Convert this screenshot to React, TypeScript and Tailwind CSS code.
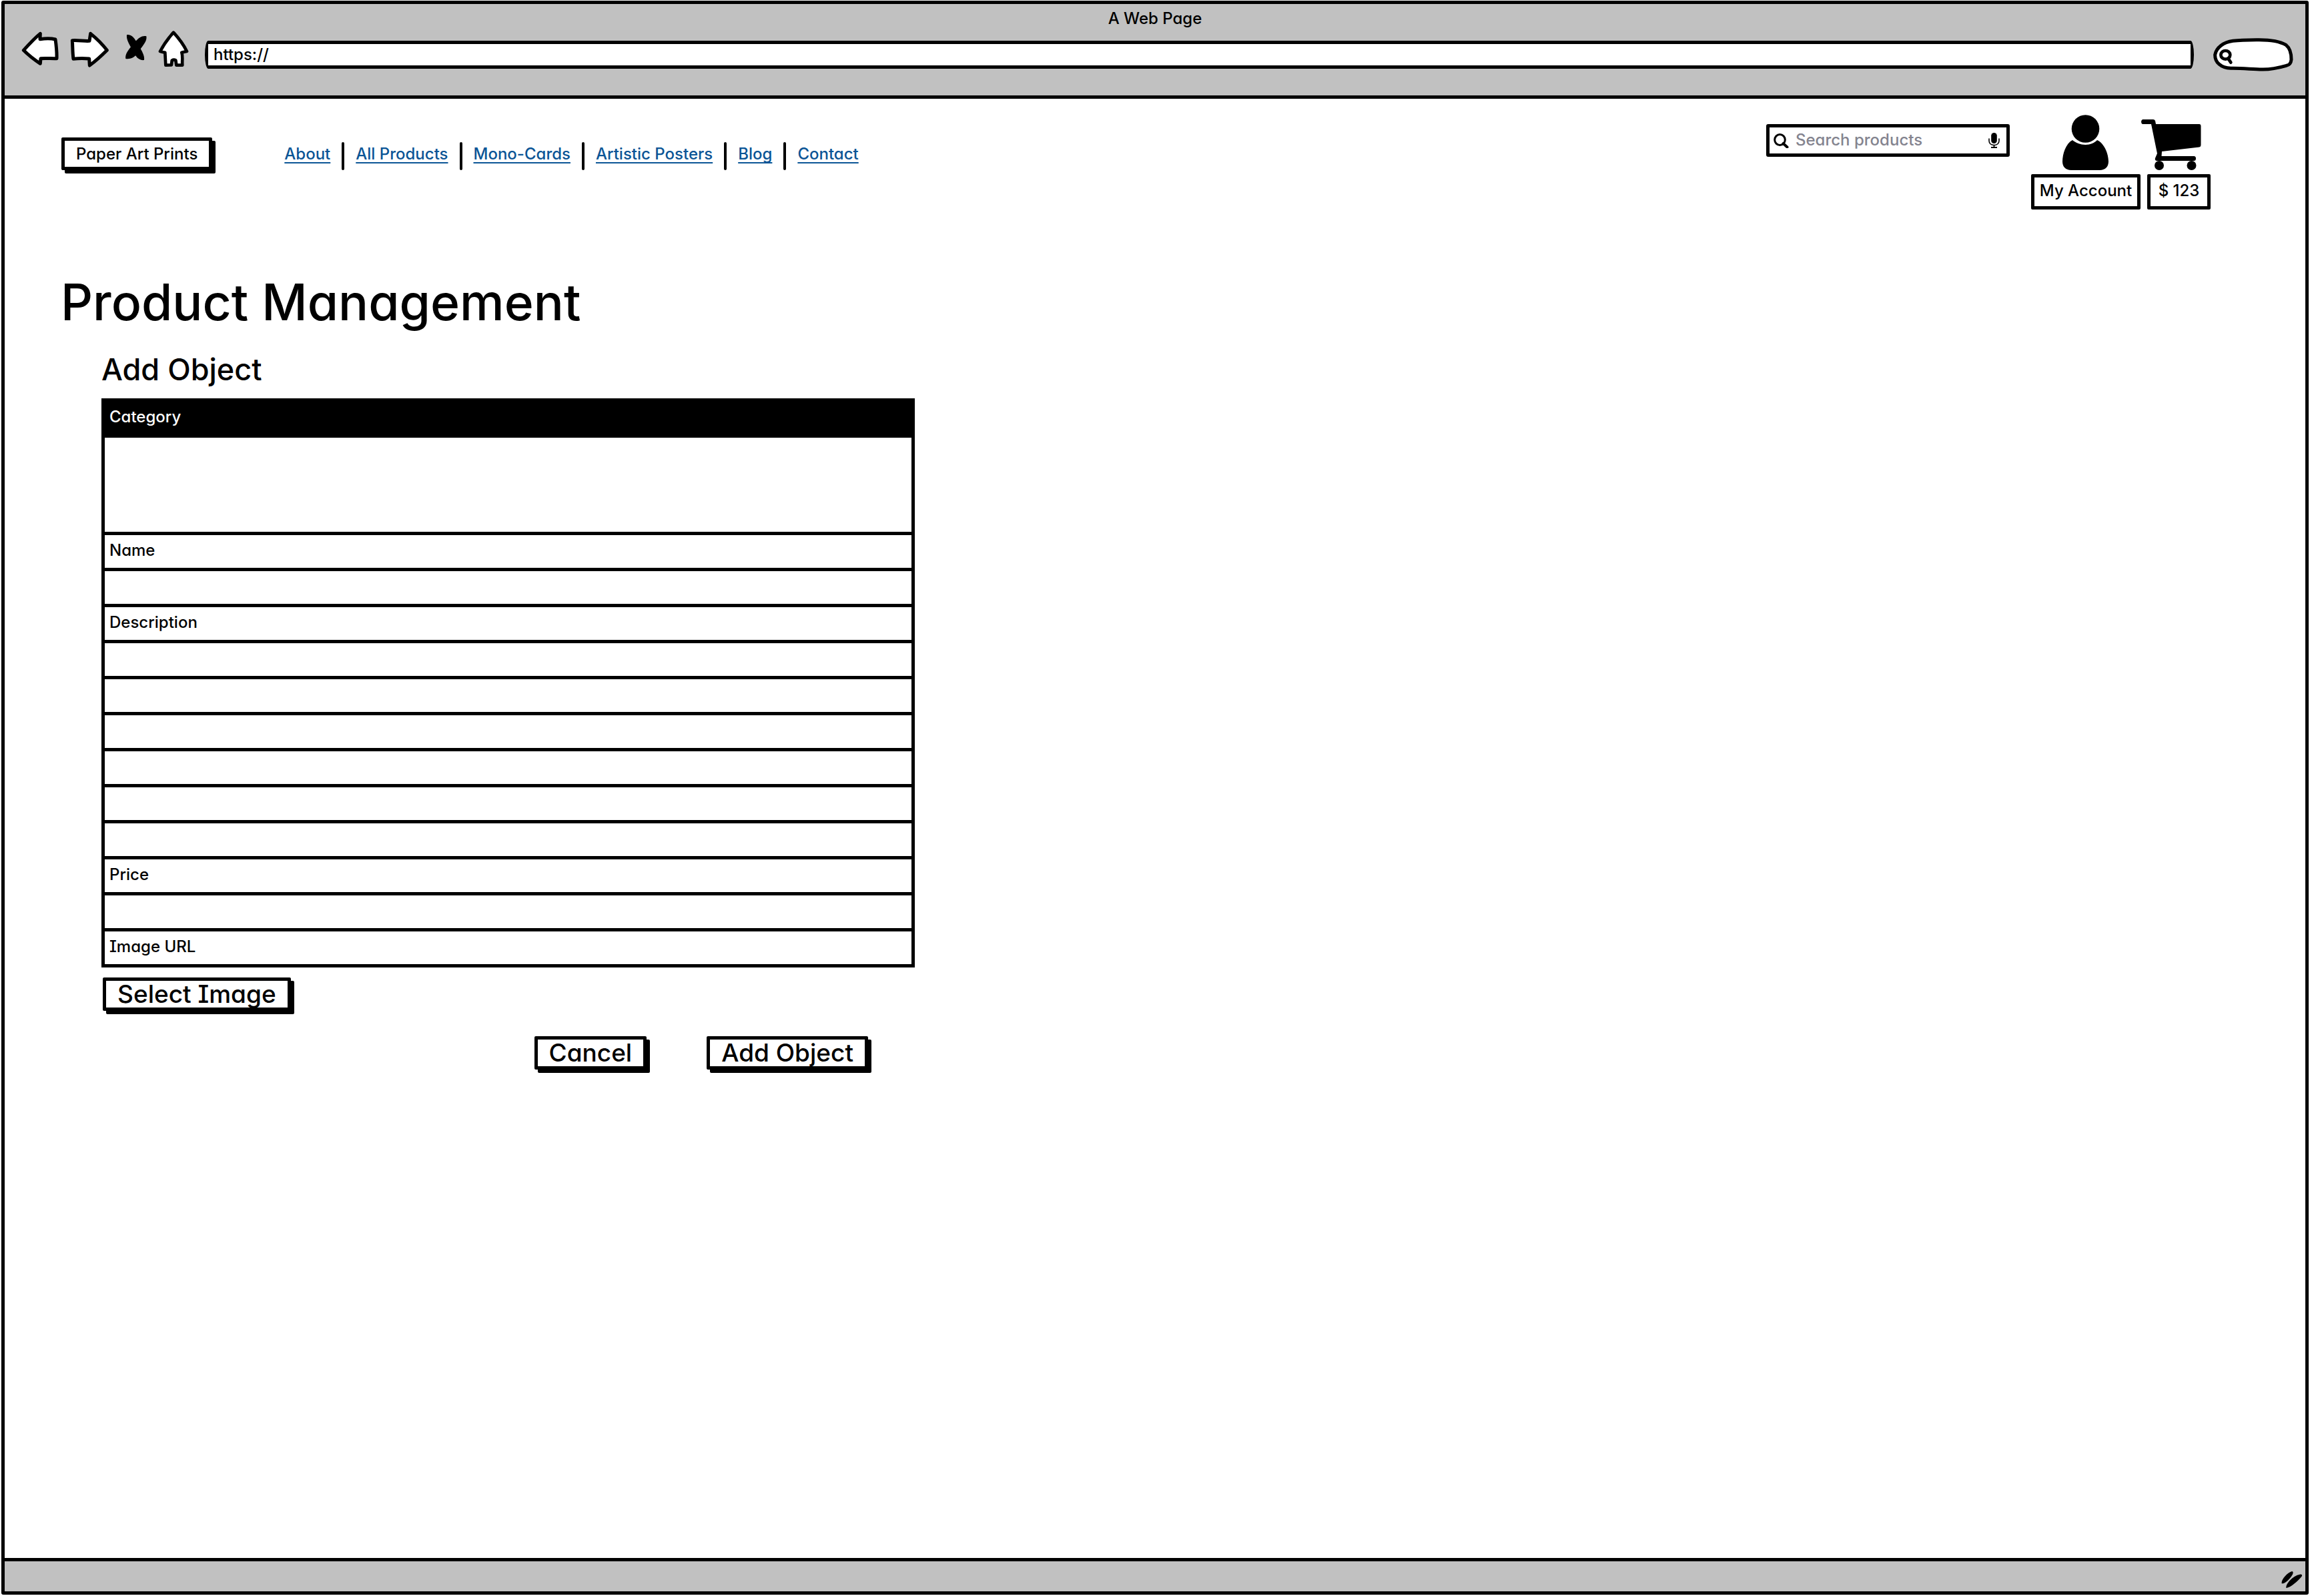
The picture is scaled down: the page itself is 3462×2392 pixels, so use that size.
import React from "react";

const NAV_LINKS = ["About", "All Products", "Mono-Cards", "Artistic Posters", "Blog", "Contact"];

function BackIcon() {
  return (
    <svg className="h-14 w-14" viewBox="93 138 168 168" fill="#fff" stroke="#000" strokeWidth="15" strokeLinejoin="round" aria-hidden="true">
      <path d="M103 226C130 196 152 172 178 151L177 176C200 173 225 172 246 177C250 205 253 235 252 263C228 264 205 261 180 263L178 286C150 268 125 248 103 226Z" />
    </svg>
  );
}

function ForwardIcon() {
  return (
    <svg className="h-14 w-[58px]" viewBox="315 138 174 168" fill="#fff" stroke="#000" strokeWidth="15" strokeLinejoin="round" aria-hidden="true">
      <path d="M325 182C352 180 380 186 402 184L407 151C433 172 460 198 481 226C455 252 430 275 403 294L401 264C377 262 352 262 330 265C326 238 327 210 325 182Z" />
    </svg>
  );
}

function StopIcon() {
  return (
    <svg className="h-14 w-[34px]" viewBox="561 138 102 168" fill="#000" aria-hidden="true">
      <path d="M570 157C580 153 594 160 604 173C613 186 622 200 630 216C641 234 651 254 648 270C634 272 621 266 611 252C602 239 594 226 588 212C578 194 568 176 570 157Z" />
      <path d="M658 163C661 178 652 194 642 206C632 219 624 230 615 243C602 260 584 267 565 264C562 248 572 232 582 219C592 206 600 197 610 185C624 169 642 158 658 163Z" />
    </svg>
  );
}

function HomeIcon() {
  return (
    <svg className="h-14 w-[46px]" viewBox="711 138 138 168" fill="#fff" stroke="#000" strokeWidth="14" strokeLinejoin="round" aria-hidden="true">
      <path d="M780 146C802 170 824 198 840 231C832 233 824 234 817 236C823 255 818 275 820 293L793 293L790 271C784 268 779 268 773 272L771 292L745 293L742 236C735 234 728 235 720 231C736 200 758 170 780 146Z" />
    </svg>
  );
}

function PillDrawing() {
  return (
    <svg className="absolute inset-0 h-full w-full" viewBox="771 168 360 153" fill="none" stroke="#000" aria-hidden="true">
      <path
        fill="#fff"
        strokeWidth="15"
        d="M965 179C1020 178 1070 185 1098 202C1118 218 1122 245 1122 268C1120 288 1112 293 1100 295C1065 305 1030 313 990 312C950 312 900 306 850 307C805 305 778 280 779 246C785 215 815 190 860 184C895 179 930 179 965 179Z"
      />
      <ellipse cx="826" cy="247" rx="21" ry="19" strokeWidth="14" />
      <path d="M838 263L850 281" strokeWidth="14" strokeLinecap="round" />
    </svg>
  );
}

function SearchIcon() {
  return (
    <svg className="h-[22px] w-[23px] shrink-0" viewBox="0 0 23 22" fill="none" stroke="#000" aria-hidden="true">
      <ellipse cx="9.5" cy="9.5" rx="7.8" ry="8" strokeWidth="3" />
      <path d="M14.5 15L20.5 20.5" strokeWidth="4" strokeLinecap="round" />
    </svg>
  );
}

function MicIcon() {
  return (
    <svg className="h-[23px] w-[17px] shrink-0" viewBox="0 0 17 23" fill="none" stroke="#000" aria-hidden="true">
      <rect x="4.2" y="0" width="8.6" height="16" rx="4.3" fill="#000" stroke="none" />
      <path d="M1 9V12C1 16 4 18.5 8.5 18.5S16 16 16 12V9" strokeWidth="1.6" strokeLinecap="round" />
      <path d="M8.5 18V22M4 22H13" strokeWidth="1.8" />
    </svg>
  );
}

function UserIcon() {
  return (
    <svg className="h-[85px] w-[70px]" viewBox="3091 170 70 85" aria-hidden="true">
      <circle cx="3125.5" cy="192" r="20.8" />
      <path d="M3106 209C3096 214 3091 230 3091 241C3091 249 3096 254 3104 254L3147 254C3155 254 3160 249 3160 241C3160 230 3154 214 3143 209C3139 213 3133 216 3125.5 216C3118 216 3111 213 3106 209Z" />
    </svg>
  );
}

function CartIcon() {
  return (
    <svg className="h-[85px] w-[95px] overflow-visible" viewBox="3218 170 95 85" aria-hidden="true">
      <path d="M3211 178H3227Q3229 178 3230 180L3231 185H3296Q3298.5 185 3298.5 188V216Q3298.5 219 3296 219.5L3240 226L3239.5 233H3288Q3291 233 3291 236.5T3288 240H3232Q3229 239 3230 236L3233 229L3224 185H3211Q3209 184 3209 181.5T3211 178Z" />
      <circle cx="3236" cy="247" r="7" />
      <circle cx="3284.500" cy="247" r="7" />
    </svg>
  );
}

function ResizeGrip() {
  return (
    <svg className="h-[27px] w-8" viewBox="357 160 96 81" aria-hidden="true">
      <path d="M359 218C355 200 385 168 405 163C413 165 410 175 404 183C392 200 375 218 359 218Z" />
      <path d="M379 238C375 220 410 182 440 177C450 176 453 180 448 187C432 206 400 236 379 238Z" />
    </svg>
  );
}

function ActionButton({ id, children }: { id?: string; children: React.ReactNode }) {
  return (
    <button
      id={id}
      type="button"
      className="cursor-pointer rounded-[2px] border-[5px] border-black bg-white px-[17px] text-[37px] leading-10 shadow-[5px_5px_0_0_#000]"
    >
      {children}
    </button>
  );
}

function LabelRow({ htmlFor, children }: { htmlFor: string; children: React.ReactNode }) {
  return (
    <tr>
      <td className="border-b-[5px] border-black p-0 pb-1 pl-[7px]">
        <label htmlFor={htmlFor} className="block leading-[45px]">
          {children}
        </label>
      </td>
    </tr>
  );
}

function FieldRow({ id, label }: { id?: string; label?: string }) {
  return (
    <tr>
      <td className="border-b-[5px] border-black p-0">
        <input id={id} aria-label={label} type="text" className="block h-[49px] w-full px-[7px] outline-none" />
      </td>
    </tr>
  );
}

function BrowserBar() {
  return (
    <div className="border-b-[5px] border-black bg-[#c1c1c1] pb-9">
      <div className="pt-[3px] text-center leading-[37px]">A Web Page</div>
      <div className="flex items-end pr-[18px] pl-[25px]">
        <div className="mb-[5px] flex">
          <button type="button" aria-label="Back" className="block cursor-pointer">
            <BackIcon />
          </button>
          <button type="button" aria-label="Forward" className="ml-[17px] block cursor-pointer">
            <ForwardIcon />
          </button>
          <button type="button" aria-label="Stop" className="ml-6 block cursor-pointer">
            <StopIcon />
          </button>
          <button type="button" aria-label="Home" className="ml-4 block cursor-pointer">
            <HomeIcon />
          </button>
        </div>
        <input
          type="text"
          aria-label="Address"
          defaultValue="https://"
          className="mb-1 ml-6 h-[42px] min-w-0 flex-1 rounded-[5px/21px] border-[5px] border-black bg-white px-2 pb-0.5 outline-none"
        />
        <label className="relative ml-[29px] block h-[51px] w-[120px]">
          <PillDrawing />
          <input type="text" aria-label="Web search" className="relative h-full w-full bg-transparent pr-4 pl-8 outline-none" />
        </label>
      </div>
    </div>
  );
}

function SiteHeader() {
  return (
    <header className="flex items-start pt-[23px] pr-[142px] pl-[85px]">
      <a
        href="#home"
        className="mt-[35px] rounded-[2px] border-[5px] border-black bg-white px-[17px] leading-[39px] whitespace-nowrap shadow-[5px_5px_0_0_#000]"
      >
        Paper Art Prints
      </a>
      <nav className="mt-[35px] ml-[108px]">
        <ul className="flex items-end leading-[49px]">
          {NAV_LINKS.map((name, i) => (
            <li key={name} className="flex items-end whitespace-nowrap">
              {i > 0 && <span className="mx-[17px] h-[42px] w-1 rounded-full bg-black" />}
              <a href="#page" className="text-[#0b5596] underline decoration-2 underline-offset-4 [text-decoration-skip-ink:none]">
                {name}
              </a>
            </li>
          ))}
        </ul>
      </nav>
      <label className="mt-[15px] ml-auto flex h-[49px] w-[365px] items-center rounded-[3px] border-[5px] border-black bg-white pr-[10px] pl-[6px]">
        <SearchIcon />
        <input
          type="text"
          placeholder="Search products"
          aria-label="Search products"
          className="ml-[10px] h-full min-w-0 flex-1 pb-0.5 outline-none placeholder:text-[#84848f] placeholder:opacity-100"
        />
        <MicIcon />
      </label>
      <a href="#account" className="ml-8 flex w-[164px] flex-col items-center gap-[5px] whitespace-nowrap">
        <UserIcon />
        <span className="flex w-full justify-center rounded-[2px] border-[5px] border-black pb-[3px] leading-10">My Account</span>
      </a>
      <a href="#cart" className="ml-[10px] flex flex-col items-center gap-[5px] whitespace-nowrap">
        <CartIcon />
        <span className="flex w-full justify-center rounded-[2px] border-[5px] border-black pb-[3px] leading-10">$ 123</span>
      </a>
    </header>
  );
}

export default function App() {
  return (
    <div className="flex min-h-screen flex-col bg-white px-0.5 pt-px pb-0.5 font-['Inter','Liberation_Sans',sans-serif] text-[24px] font-medium text-black [font-feature-settings:'cv11','cv08']">
      <div className="flex flex-1 flex-col rounded-[3px] border-[5px] border-black">
        <BrowserBar />
        <SiteHeader />
        <main className="flex-1 pt-[91px] pl-[84px]">
          <h1 className="text-[75px] leading-[96px] font-medium">Product Management</h1>
          <form className="mt-[25px] ml-[61px] w-[1219px] max-w-full">
            <h2 className="text-[45px] leading-[56px] font-medium">Add Object</h2>
            <table className="mt-[15px] w-full border-separate border-spacing-0 border-x-[5px] border-t-[5px] border-black">
              <thead>
                <tr>
                  <th scope="col" className="bg-black p-0 pb-[9px] pl-[7px] text-left font-medium text-white">
                    <label htmlFor="category" className="block leading-[45px]">
                      Category
                    </label>
                  </th>
                </tr>
              </thead>
              <tbody>
                <tr>
                  <td className="border-b-[5px] border-black p-0">
                    <input id="category" type="text" className="block h-[141px] w-full px-[7px] outline-none" />
                  </td>
                </tr>
                <LabelRow htmlFor="name">Name</LabelRow>
                <FieldRow id="name" />
                <LabelRow htmlFor="description-1">Description</LabelRow>
                <FieldRow id="description-1" />
                <FieldRow label="Description line 2" />
                <FieldRow label="Description line 3" />
                <FieldRow label="Description line 4" />
                <FieldRow label="Description line 5" />
                <FieldRow label="Description line 6" />
                <LabelRow htmlFor="price">Price</LabelRow>
                <FieldRow id="price" />
                <LabelRow htmlFor="image">Image URL</LabelRow>
              </tbody>
            </table>
            <div className="mt-[15px] flex pl-0.5">
              <ActionButton id="image">Select Image</ActionButton>
            </div>
            <div className="mt-[38px] mr-[70px] flex justify-end gap-[90px]">
              <ActionButton>Cancel</ActionButton>
              <ActionButton>Add Object</ActionButton>
            </div>
          </form>
        </main>
        <footer className="flex h-[50px] items-end justify-end border-t-[5px] border-black bg-[#c1c1c1] pr-1 pb-1">
          <ResizeGrip />
        </footer>
      </div>
    </div>
  );
}
